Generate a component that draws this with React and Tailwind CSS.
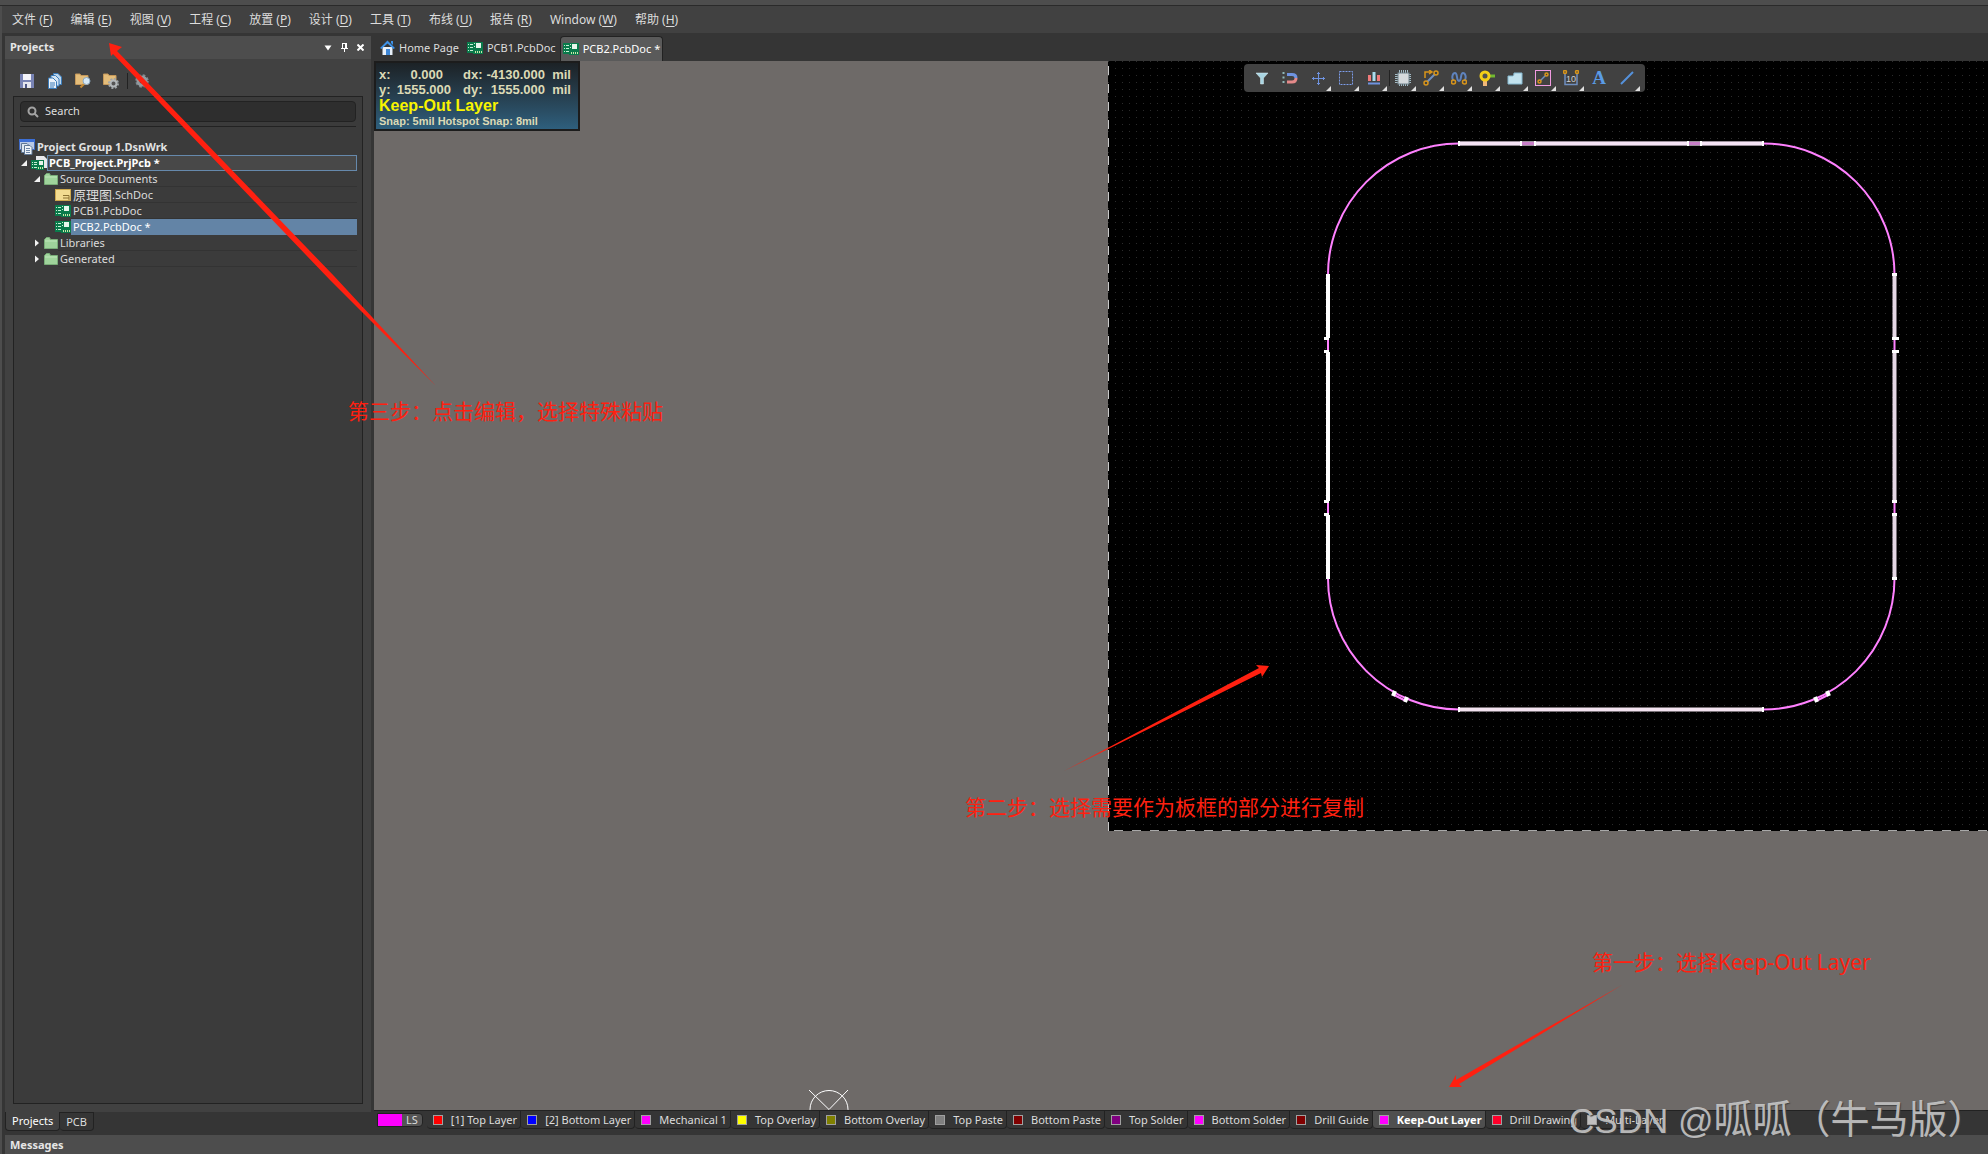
import React from "react";

const MENUS = [
  ["文件", "F"], ["编辑", "E"], ["视图", "V"], ["工程", "C"], ["放置", "P"], ["设计", "D"],
  ["工具", "T"], ["布线", "U"], ["报告", "R"], ["Window", "W"], ["帮助", "H"],
];

const LAYERS = [
  ["[1] Top Layer", "#ff0000"],
  ["[2] Bottom Layer", "#0000ff"],
  ["Mechanical 1", "#ff00ff"],
  ["Top Overlay", "#ffff00"],
  ["Bottom Overlay", "#808000"],
  ["Top Paste", "#808080"],
  ["Bottom Paste", "#800000"],
  ["Top Solder", "#800080"],
  ["Bottom Solder", "#ff00ff"],
  ["Drill Guide", "#800000"],
  ["Keep-Out Layer", "#ff00ff"],
  ["Drill Drawing", "#ff002a"],
  ["Multi-Layer", "#c0c0c0"],
];

function PcbIcon() {
  return (
    <svg width="16" height="12" viewBox="0 0 16 12" className="shrink-0" aria-hidden="true">
      <path d="M0 0H16V12H6V11H0Z" fill="#0a7a4b" />
      <path d="M1 2.500H2M3 2.500H6M1 5.500H2M3 5.500H6M1 8.500H2M3 8.500H6" stroke="#c6f0d5" strokeWidth="1" />
      <rect x="9" y="1" width="5" height="5" fill="#e8f5ec" />
      <path d="M7 1.500H8M7 4.500H8" stroke="#c6f0d5" />
      <path d="M8.500 9V11M10.500 9V11M12.500 9V11M14.500 9V11" stroke="#c8e8a8" />
    </svg>
  );
}

function HomeIcon() {
  return (
    <svg width="15" height="16" viewBox="0 0 15 16" className="shrink-0" aria-hidden="true">
      <path d="M2.500 7H12.500V15H2.500Z" fill="#e9f0f8" />
      <path d="M0 8L7.500 0.500L15 8L13.500 9L7.500 3.500L1.500 9Z" fill="#3d92e8" />
      <path d="M11 1H13V5L11 3Z" fill="#3d92e8" />
      <rect x="6" y="9" width="4" height="6" fill="#3d86d6" />
    </svg>
  );
}

function FolderIcon() {
  return (
    <svg width="14" height="12" viewBox="0 0 14 12" className="shrink-0" aria-hidden="true">
      <path d="M0.500 2.500L2.500 0.500H5.500L6.500 2.500H13.500V11.500H0.500Z" fill="#9fd39b" stroke="#79ad78" />
      <path d="M1 4H13" stroke="#bfe6ba" />
    </svg>
  );
}

function SchIcon() {
  return (
    <svg width="16" height="12" viewBox="0 0 16 12" className="shrink-0" aria-hidden="true">
      <rect x="0.500" y="0.500" width="15" height="11" fill="#f3dc91" stroke="#cda84e" />
      <path d="M8 6.500H14V11M8 9H14" stroke="#8b7131" fill="none" />
    </svg>
  );
}

function GroupIcon() {
  return (
    <svg width="16" height="16" viewBox="0 0 16 16" className="shrink-0" aria-hidden="true">
      <rect x="0.500" y="0.500" width="15" height="10" fill="#b9c9e6" stroke="#3f68bf" />
      <rect x="0" y="0" width="16" height="3" fill="#3c6fd6" />
      <path d="M2.500 4.500H8L10 6.500V13.500H2.500Z" fill="#dde7f2" stroke="#5f7795" />
      <path d="M5.500 6.500H11L13 8.500V15.500H5.500Z" fill="#eef3f8" stroke="#5f7795" />
      <path d="M7 9.500H11M7 11.500H11M7 13.500H11" stroke="#6d86a6" />
    </svg>
  );
}

function ProjectIcon() {
  return (
    <svg width="16" height="14" viewBox="0 0 16 14" className="shrink-0" aria-hidden="true">
      <path d="M5 0H13L16 3V12H5Z" fill="#e8e9ec" />
      <path d="M0 4H13V14H5V13H0Z" fill="#0a7a4b" />
      <path d="M1 6.500H2M3 6.500H6M1 8.500H2M3 8.500H6M1 11.500H2M3 11.500H6" stroke="#c6f0d5" />
      <rect x="8" y="5" width="4" height="4" fill="#e8f5ec" />
      <path d="M7.500 11V13M9.500 11V13M11.500 11V13" stroke="#c8e8a8" />
    </svg>
  );
}

function Twisty({ open }) {
  return (
    <svg width="6" height="8" viewBox="0 0 6 8" className="shrink-0" aria-hidden="true">
      <path d={open ? "M6 1V7H0Z" : "M1 0.500L5 4L1 7.500Z"} fill="#f2f2f2" />
    </svg>
  );
}

function TreeRow({ indent, twisty, icon, children, state }) {
  const label =
    state === "selected"
      ? "bg-[#6384a6] pl-0.5 text-white"
      : "border-b border-[#333333] pl-0.5 text-[#dcdcdc]";
  return (
    <li className={`flex h-4 items-center ${indent}`} role="treeitem">
      {twisty && <span className="mr-1 flex w-1.5"><Twisty open={twisty === "open"} /></span>}
      {icon}
      <button type="button" className={`flex h-4 flex-1 items-center text-left whitespace-nowrap ${label}`}>
        {children}
      </button>
    </li>
  );
}

const FOLDER = "M0.500 3V12.500H9M0.500 2.500V1H5L6 2.500H13V7";

function PanelTool({ label, children }) {
  return (
    <button type="button" aria-label={label} className="flex h-4 w-4 items-center justify-center">
      <svg width="16" height="16" viewBox="0 0 16 16" fill="none" aria-hidden="true">{children}</svg>
    </button>
  );
}

function ProjectsPanel() {
  return (
    <aside className="flex w-[366px] shrink-0 flex-col">
      <div className="mt-[3px] flex min-h-0 flex-1 flex-col bg-[#414141]">
        <header className="flex h-[23px] items-center bg-[#4d4d4d] pr-[7px] pl-[5px]">
          <h2 className="flex-1 text-[11px] font-bold text-[#e6e6e6]">Projects</h2>
          <div className="flex items-center gap-2 text-white">
            <button type="button" aria-label="Panel menu">
              <svg width="8" height="8" viewBox="0 0 8 8"><path d="M0.500 1.500H7.500L4 6.500Z" fill="#fff" /></svg>
            </button>
            <button type="button" aria-label="Pin panel">
              <svg width="9" height="9" viewBox="0 0 9 9"><path d="M2 0H7V5H8V6H5V9H4V6H1V5H2ZM3 1V5H5V1Z" fill="#fff" fillRule="evenodd" /></svg>
            </button>
            <button type="button" aria-label="Close panel">
              <svg width="7" height="7" viewBox="0 0 7 7"><path d="M0.500 0.500L6.500 6.500M6.500 0.500L0.500 6.500" stroke="#fff" strokeWidth="2" /></svg>
            </button>
          </div>
        </header>
        <div className="flex h-[37px] items-center gap-3 pt-1.5 pl-3.5">
          <PanelTool label="Save">
            <path d="M1 1H15V15H1Z" fill="#7883b4" />
            <rect x="4" y="1" width="8" height="6" fill="#f3f3f8" />
            <rect x="4" y="9" width="8" height="6" fill="#e4e5ee" />
            <rect x="6" y="11" width="2" height="4" fill="#4b5584" />
          </PanelTool>
          <PanelTool label="Save all">
            <path d="M6.500 0.500H11L14.500 4V11.500H6.500Z" fill="#bcd6ee" stroke="#3b7cba" />
            <path d="M4 2.500H8.500L12 6V13H4Z" fill="#d3e4f3" stroke="#3b7cba" />
            <path d="M1.500 5H6L9.500 8.500V15.500H1.500Z" fill="#eaf2fa" stroke="#3b7cba" />
            <path d="M3 10H8M3 12H8M3 14H7" stroke="#3b7cba" />
          </PanelTool>
          <PanelTool label="Find in project">
            <path d="M0.500 11.500V1H5L6 2.500H13V11.500Z" fill="#e4bd7a" stroke="#c5985a" />
            <path d="M5.500 14.500L9 11" stroke="#c58b35" strokeWidth="2" />
            <circle cx="11.500" cy="8" r="3.500" fill="#d5e8f6" stroke="#8aa8c0" />
          </PanelTool>
          <PanelTool label="Project options">
            <path d="M0.500 11.500V1H5L6 2.500H13V11.500Z" fill="#e4bd7a" stroke="#c5985a" />
            <circle cx="10.500" cy="10.500" r="4.500" stroke="#9da3a6" strokeWidth="2" strokeDasharray="2 1.500" />
            <circle cx="10.500" cy="10.500" r="3" fill="#555" stroke="#b3b8ba" strokeWidth="2" />
          </PanelTool>
          <span className="-mr-1.5 -ml-1 h-4 w-px bg-[#222222]" />
          <PanelTool label="Settings">
            <circle cx="8" cy="8" r="5.500" stroke="#818a90" strokeWidth="2.500" strokeDasharray="2.500 1.820" />
            <circle cx="8" cy="8" r="4" stroke="#929a9f" strokeWidth="3" />
          </PanelTool>
        </div>
        <div className="mx-2 mb-2 flex min-h-0 flex-1 flex-col border border-[#222222] bg-[#3b3b3b] px-1.5 pt-1">
          <label className="flex h-[21px] items-center gap-1.5 rounded border border-[#222222] bg-[#2e2e2e] px-1.5">
            <svg width="12" height="12" viewBox="0 0 12 12" fill="none" aria-hidden="true">
              <circle cx="5" cy="5" r="3.500" stroke="#a3a3a3" strokeWidth="2" />
              <path d="M7.500 7.500L11 11" stroke="#a3a3a3" strokeWidth="2" />
            </svg>
            <input
              type="search"
              aria-label="Search"
              placeholder="Search"
              className="min-w-0 flex-1 bg-transparent text-[11px] outline-none placeholder:text-[#dedede]"
            />
          </label>
          <hr className="mt-1 border-t border-[#222222]" />
          <ul className="-mx-px mt-3 text-[11px] leading-4" role="tree">
            <li className="flex h-4 items-center gap-0.5 font-bold text-[#e2e2e2]" role="treeitem">
              <GroupIcon />
              <button type="button" className="whitespace-nowrap">Project Group 1.DsnWrk</button>
            </li>
            <li className="flex h-4 items-center pl-0.5" role="treeitem">
              <span className="mr-1 flex"><Twisty open /></span>
              <ProjectIcon />
              <button type="button" className="flex h-4 flex-1 items-center border border-[#6689ac] bg-[#484848] pl-px font-bold whitespace-nowrap text-white">
                PCB_Project.PrjPcb *
              </button>
            </li>
            <TreeRow indent="pl-[15px]" twisty="open" icon={<FolderIcon />}>Source Documents</TreeRow>
            <TreeRow indent="pl-9" icon={<SchIcon />}>
              <span className="text-[13px]">原理图</span>.SchDoc
            </TreeRow>
            <TreeRow indent="pl-9" icon={<PcbIcon />}>PCB1.PcbDoc</TreeRow>
            <TreeRow indent="pl-9" icon={<PcbIcon />} state="selected">PCB2.PcbDoc *</TreeRow>
            <TreeRow indent="pl-[15px]" twisty="closed" icon={<FolderIcon />}>Libraries</TreeRow>
            <TreeRow indent="pl-[15px]" twisty="closed" icon={<FolderIcon />}>Generated</TreeRow>
          </ul>
        </div>
      </div>
      <nav className="flex h-[23px] items-start text-[11px] text-[#dddddd]">
        <button type="button" className="h-[19px] rounded-b border border-t-0 border-[#222222] bg-[#414141] px-1.5 leading-4 text-white">
          Projects
        </button>
        <button type="button" className="h-[19px] rounded-b border border-l-0 border-[#222222] px-1.5 leading-4">PCB</button>
      </nav>
    </aside>
  );
}

const NODE = { fill: "none", stroke: "#d9951a", strokeWidth: 1.5 };

const TOOLS = [
  ["Filter", false, <path d="M2 3H14L9.500 8V14H6.500V8Z" fill="#a9d5e2" stroke="#d8eff5" strokeWidth="0.500" />],
  ["Snapping", false,
    <>
      <path d="M1.500 2V14" stroke="#8fb8b8" strokeWidth="2" strokeDasharray="2 2.500" />
      <path d="M5 4.500H10Q14 4.500 14 8" stroke="#6f93e0" strokeWidth="3" />
      <path d="M14 8Q14 12 10 12H5" stroke="#e58a8a" strokeWidth="3" />
    </>],
  ["Move", true, <path d="M8.500 2V15M2 8.500H15M7 3.500H10M7 13.500H10M3.500 7V10M13.500 7V10" stroke="#6f93e0" />],
  ["Selection area", true, <rect x="1.500" y="1.500" width="13" height="13" stroke="#7d9dea" strokeDasharray="2 1" />],
  ["Align", true,
    <>
      <path d="M3.500 5V11M12.500 5V11" stroke="#f07a7a" strokeWidth="3" />
      <path d="M8 2V11" stroke="#a9dcec" strokeWidth="3" />
      <path d="M2 13.500H14" stroke="#6f93e0" strokeWidth="2" />
    </>],
  ["Component", true,
    <>
      <path d="M4.500 0V16M6.500 0V16M8.500 0V16M10.500 0V16M12.500 0V16M0 4.500H16M0 6.500H16M0 8.500H16M0 10.500H16M0 12.500H16" stroke="#a3bcc6" />
      <rect x="3" y="3" width="11" height="11" fill="#d5dadd" stroke="#71848e" />
    </>],
  ["Route", true,
    <>
      <path d="M2 8V2H8M6 0L9 2L6 4" stroke="#d9951a" strokeWidth="1.500" />
      <path d="M4 12L12 4" stroke="#6f8fc0" strokeWidth="2" />
      <circle cx="13" cy="3" r="2" {...NODE} />
      <circle cx="3" cy="13" r="2" {...NODE} />
    </>],
  ["Tune length", true,
    <>
      <path d="M2.500 11C0 7 2 3 4 3C7 3 5 11 8 11S9 3 12 3C14 3 16 7 13.500 11" stroke="#5f83bd" strokeWidth="2" />
      <circle cx="2.500" cy="12" r="2" {...NODE} />
      <circle cx="13.500" cy="12" r="2" {...NODE} />
    </>],
  ["Pad", true,
    <>
      <path d="M6 8V16" stroke="#f0b779" strokeWidth="4" />
      <path d="M9 6H16" stroke="#71b832" strokeWidth="3" />
      <circle cx="6" cy="6" r="4" fill="#505050" stroke="#f5cf17" strokeWidth="3" />
    </>],
  ["Polygon", true, <path d="M1 14V6H6Q7 6 7 3H15V14Z" fill="#c2e2ee" stroke="#86b9d0" />],
  ["Keepout", true,
    <>
      <rect x="0.500" y="0.500" width="15" height="15" stroke="#f09ae0" />
      <path d="M5 11L11 5" stroke="#6f8fc0" strokeWidth="1.500" />
      <circle cx="11.500" cy="4.500" r="1.500" {...NODE} />
      <circle cx="4.500" cy="11.500" r="1.500" {...NODE} />
    </>],
  ["Dimension", true,
    <>
      <path d="M2 4V14.500H14V4" stroke="#6f8fc0" strokeWidth="1.500" />
      <circle cx="2" cy="2" r="1.500" {...NODE} />
      <circle cx="14" cy="2" r="1.500" {...NODE} />
      <text x="8" y="12" textAnchor="middle" fontSize="9" fill="#d0d0d0" fontFamily="Liberation Sans">10</text>
    </>],
  ["Text", false, null],
  ["Line", true, <path d="M2 14L14 2" stroke="#5592dc" strokeWidth="2" />],
];

function ActiveBar() {
  return (
    <div className="absolute top-[3px] left-[870px] flex h-7 items-center rounded-sm bg-[#414141] px-1" role="toolbar">
      {TOOLS.map(([name, more, art], i) => (
        <button
          key={name}
          type="button"
          aria-label={name}
          className={`relative flex h-7 w-7 items-center justify-center ${i === 5 ? "ml-px" : ""}`}
        >
          {art ? (
            <svg width="16" height="16" viewBox="0 0 16 16" fill="none" aria-hidden="true">{art}</svg>
          ) : (
            <span className="text-[19px] leading-7 font-bold text-[#5a9be6] [font-family:'Liberation_Serif',serif]">A</span>
          )}
          {more && (
            <svg width="5" height="5" viewBox="0 0 5 5" className="absolute right-px bottom-px" aria-hidden="true">
              <path d="M5 0V5H0Z" fill="#e0e0e0" />
            </svg>
          )}
          {i === 5 && <span className="absolute left-0 h-4 w-px bg-[#222222]" />}
        </button>
      ))}
    </div>
  );
}

function Board() {
  const tick = (x, y, w, h) => <rect key={`${x}-${y}`} x={x} y={y} width={w} height={h} fill="#fff" />;
  return (
    <div className="absolute top-0 right-0 left-[734px] h-[770px] overflow-hidden bg-black">
      <svg className="absolute inset-0 h-full w-full" fill="none" aria-label="Board outline">
        <defs>
          <pattern id="grid" width="14" height="14" patternUnits="userSpaceOnUse">
            <path d="M0 0H1V1H0ZM7 0H8V1H7ZM0 7H1V8H0ZM7 7H8V8H7Z" fill="#2b2b2b" />
          </pattern>
        </defs>
        <rect width="100%" height="100%" fill="url(#grid)" />
        <path d="M0.500 5V770" stroke="#c8c8c8" strokeDasharray="9 9" />
        <path d="M6 769.500H880" stroke="#a8a8a8" strokeDasharray="9 9" />
        <g transform="translate(-1108 -61)">
          <rect x="1328" y="143.500" width="566.500" height="566" rx="131" stroke="#ff80ff" strokeWidth="2" />
          <path d="M1459 143.500H1763" stroke="#9a8f9a" strokeWidth="5" />
          <path d="M1521 143.500H1535M1688 143.500H1701" stroke="#c97fc9" strokeWidth="3" />
          <path d="M1459 143.500H1521M1535 143.500H1688M1701 143.500H1763" stroke="#f6e3f6" strokeWidth="3" />
          <path d="M1459 709.500H1763" stroke="#f3e3f0" strokeWidth="4" />
          <path d="M1328 274V338M1328 352V501M1328 515V579" stroke="#fff" strokeWidth="4" />
          <path d="M1894.500 274V338M1894.500 352V501M1894.500 515V579" stroke="#e6d8e6" strokeWidth="4" />
          {[1458, 1520, 1534, 1687, 1700, 1762].map((x) => tick(x, 141, 2, 5))}
          {[1458, 1762].map((x) => tick(x, 707, 2, 5))}
          {[337, 350, 500, 513].map((y) => tick(1324, y, 5, 3))}
          {[337, 350].map((y) => tick(1892, y, 7, 3))}
          {[273, 500, 513, 577].map((y) => tick(1892, y, 5, 3))}
          <path d="M1394 695L1406 701M1828 695L1816 701" stroke="#ff80ff" strokeWidth="2" />
          <path d="M1395 691L1393 696M1407 697L1405 702M1827 691L1829 696M1815 697L1817 702" stroke="#fff" strokeWidth="4" />
        </g>
      </svg>
    </div>
  );
}

function Readout() {
  return (
    <div className="absolute top-0 left-0 h-[70px] w-[206px] border-2 border-[#1c1c1c] bg-linear-to-b from-[#1c2226] to-[#2e5f7d] px-[3px] pt-1 text-[#dcdab6] [font-family:'Liberation_Sans',sans-serif]">
      <div className="grid w-[192px] grid-cols-[14px_58px_28px_auto_26px] text-[13px] leading-[15px] font-bold whitespace-nowrap">
        <span>x:</span><span className="pr-2 text-right">0.000</span>
        <span className="pl-3">dx:</span><span className="text-right">-4130.000</span><span className="text-right">mil</span>
        <span>y:</span><span className="text-right">1555.000</span>
        <span className="pl-3">dy:</span><span className="text-right">1555.000</span><span className="text-right">mil</span>
      </div>
      <p className="text-[16px] leading-[17px] font-bold text-[#f8f400]">Keep-Out Layer</p>
      <p className="text-[11px] leading-[14px] font-bold whitespace-nowrap">Snap: 5mil Hotspot Snap: 8mil</p>
    </div>
  );
}

function Note({ className, children }) {
  return (
    <p className={`absolute text-[21px] leading-[28px] whitespace-nowrap text-[#ff2010] [font-family:'Noto_Sans','Noto_Sans_CJK_SC',sans-serif] ${className}`}>
      {children}
    </p>
  );
}

export default function App() {
  return (
    <div className="relative flex h-screen flex-col overflow-hidden bg-[#353535] text-[#dddddd] [font-family:'Noto_Sans','Noto_Sans_CJK_SC',sans-serif]">
      <div className="h-[6px] shrink-0 border-b border-[#2a2a2a] bg-[#4d4d4d]" />
      <div className="flex min-h-0 flex-1 border-l-2 border-[#4d4d4d]">
        <div className="flex min-w-0 flex-1 flex-col">
          <nav className="flex h-[27px] shrink-0 items-center gap-[18px] bg-[#414141] pl-2.5 text-[12px]">
            {MENUS.map(([name, key]) => (
              <button key={key} type="button" className="whitespace-nowrap">
                {name} (<span className="underline underline-offset-2">{key}</span>)
              </button>
            ))}
          </nav>
          <div className="flex min-h-0 flex-1 gap-[3px] pl-[3px]">
            <ProjectsPanel />
            <main className="flex min-w-0 flex-1 flex-col">
              <nav className="flex h-7 shrink-0 items-end text-[11px]">
                <button type="button" className="flex h-[26px] items-center gap-1 pr-1.5 pl-1.5 whitespace-nowrap"><HomeIcon />Home Page</button>
                <button type="button" className="flex h-[26px] items-center gap-1 pr-1 pl-0.5 whitespace-nowrap"><PcbIcon />PCB1.PcbDoc</button>
                <button type="button" className="flex h-[25px] items-center gap-1 rounded-t border border-b-0 border-[#222222] bg-[#5a5a5a] px-0.5 whitespace-nowrap text-white"><PcbIcon />PCB2.PcbDoc *</button>
              </nav>
              <section className="relative min-h-0 flex-1 overflow-hidden bg-[#6e6a68]">
                <Board />
                <Readout />
                <ActiveBar />
                <svg width="42" height="21" viewBox="0 0 42 21" fill="none" className="absolute bottom-0 left-[434px]" aria-hidden="true">
                  <circle cx="21" cy="20.500" r="19" stroke="#fff" />
                  <path d="M1 1L21 20.500L40 1" stroke="#fff" />
                </svg>
              </section>
              <nav className="flex h-[25px] shrink-0 items-start border-t border-[#222222] pl-[3px] text-[11px] leading-4">
                <button type="button" className="mt-0.5 mr-1 flex h-3.5 items-center rounded-r border border-[#222222] bg-[#555555] pr-1 leading-3">
                  <span className="mr-1 h-full w-6 bg-[#ff00ff]" />LS
                </button>
                {LAYERS.map(([name, color]) => (
                  <button
                    key={name}
                    type="button"
                    className={`flex h-[18px] items-center gap-2 rounded-b border border-t-0 border-l-0 border-[#222222] pr-[3px] pl-1.5 whitespace-nowrap ${
                      name === "Keep-Out Layer" ? "bg-[#4f4f4f] font-bold text-white" : ""
                    }`}
                  >
                    <span className="h-2.5 w-2.5 border border-[#a0a0a0]" style={{ backgroundColor: color }} />
                    {name}
                  </button>
                ))}
              </nav>
            </main>
          </div>
          <footer className="ml-[3px] flex h-[19px] shrink-0 items-center bg-[#4d4d4d] pt-0.5 pl-[5px] text-[11px] font-bold text-[#e6e6e6]">
            Messages
          </footer>
        </div>
      </div>

      <svg className="pointer-events-none absolute inset-0 h-full w-full" fill="#ff2010" aria-hidden="true">
        <path d="M109 43L122 47L117 51L334 276L436 386L330 280L113 54L111 56Z" />
        <path d="M1269 666L1256 665L1259 668L1064 771L1261 673L1262 677Z" />
        <path d="M1449 1087L1456 1075L1456 1080L1622 985L1459 1084L1462 1087Z" />
      </svg>
      <Note className="top-[397px] left-[348px]">第三步：点击编辑，选择特殊粘贴</Note>
      <Note className="top-[793px] left-[965px]">第二步：选择需要作为板框的部分进行复制</Note>
      <Note className="top-[948px] left-[1592px]">第一步：选择Keep-Out Layer</Note>
      <p className="pointer-events-none absolute top-[1088px] left-[1569px] text-[35px] leading-[56px] whitespace-nowrap text-[#d8d8d8]/80 [font-family:'Liberation_Sans',sans-serif] [text-shadow:1px_1px_1px_#444]">
        CSDN @<span className="text-[39px] [font-family:'Noto_Sans_CJK_SC',sans-serif]">呱呱（牛马版）</span>
      </p>
    </div>
  );
}
